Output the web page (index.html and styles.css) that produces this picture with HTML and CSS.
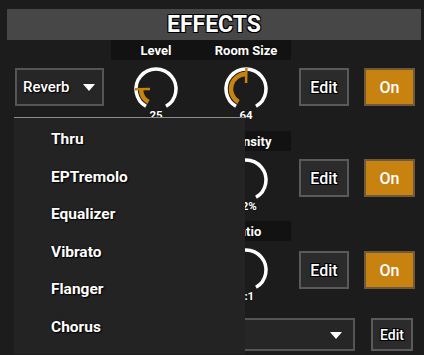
FILE: index.html
```html
<!DOCTYPE html>
<html>
<head>
<meta charset="utf-8">
<link rel="stylesheet" href="styles.css">
</head>
<body>
<div class="app">
  <div class="header">EFFECTS</div>

  <div class="row r1">
    <div class="sel-cell">
      <div class="select"><span>Reverb</span><span class="caret"></span></div>
      <div class="menu">
        <div class="item">Thru</div>
        <div class="item">EPTremolo</div>
        <div class="item">Equalizer</div>
        <div class="item">Vibrato</div>
        <div class="item">Flanger</div>
        <div class="item">Chorus</div>
      </div>
    </div>
    <div class="knob-cell">
      <div class="klabel">Level</div>
      <svg class="knob" width="46" height="46" viewBox="0 0 46 46">
        <path class="track" d="M13 40.32 A20 20 0 1 1 33 40.32"/>
        <path class="val" d="M15.5 35.99 A15 15 0 0 1 8 23.26"/>
        <line class="ptr" x1="17" y1="23.1" x2="2" y2="23.37"/>
      </svg>
      <div class="kval">25</div>
    </div>
    <div class="knob-cell">
      <div class="klabel">Room Size</div>
      <svg class="knob" width="46" height="46" viewBox="0 0 46 46">
        <path class="track" d="M13 40.32 A20 20 0 1 1 33 40.32"/>
        <path class="val" d="M15.5 35.99 A15 15 0 0 1 23.26 8"/>
        <line class="ptr" x1="23.1" y1="17" x2="23.37" y2="2"/>
      </svg>
      <div class="kval">64</div>
    </div>
    <div class="btn edit">Edit</div>
    <div class="btn on">On</div>
  </div>

  <div class="row r2">
    <div class="sel-cell">
      <div class="select"><span></span><span class="caret"></span></div>
    </div>
    <div class="knob-cell">
      <div class="klabel"></div>
      <svg class="knob" width="46" height="46" viewBox="0 0 46 46">
        <path class="track" d="M13 40.32 A20 20 0 1 1 33 40.32"/>
        <path class="val" d="M15.5 35.99 A15 15 0 0 1 10.01 15.5"/>
        <line class="ptr" x1="17.8" y1="20" x2="4.81" y2="12.5"/>
      </svg>
      <div class="kval"></div>
    </div>
    <div class="knob-cell">
      <div class="klabel">Intensity</div>
      <svg class="knob" width="46" height="46" viewBox="0 0 46 46">
        <path class="track" d="M13 40.32 A20 20 0 1 1 33 40.32"/>
        <path class="val" d="M15.5 35.99 A15 15 0 0 1 9.3 29.1"/>
        <line class="ptr" x1="17.52" y1="25.44" x2="3.82" y2="31.54"/>
      </svg>
      <div class="kval">12%</div>
    </div>
    <div class="btn edit">Edit</div>
    <div class="btn on">On</div>
  </div>

  <div class="row r3">
    <div class="sel-cell">
      <div class="select"><span></span><span class="caret"></span></div>
    </div>
    <div class="knob-cell">
      <div class="klabel"></div>
      <svg class="knob" width="46" height="46" viewBox="0 0 46 46">
        <path class="track" d="M13 40.32 A20 20 0 1 1 33 40.32"/>
        <path class="val" d="M15.5 35.99 A15 15 0 0 1 28.13 8.9"/>
        <line class="ptr" x1="25.05" y1="17.36" x2="30.18" y2="3.27"/>
      </svg>
      <div class="kval"></div>
    </div>
    <div class="knob-cell">
      <div class="klabel">Ratio</div>
      <svg class="knob" width="46" height="46" viewBox="0 0 46 46">
        <path class="track" d="M13 40.32 A20 20 0 1 1 33 40.32"/>
        <path class="val" d="M15.5 35.99 A15 15 0 0 1 8.23 25.6"/>
        <line class="ptr" x1="17.09" y1="24.04" x2="2.32" y2="26.65"/>
      </svg>
      <div class="kval">4:1</div>
    </div>
    <div class="btn edit">Edit</div>
    <div class="btn on">On</div>
  </div>

  <div class="row r4">
    <div class="select wide"><span></span><span class="caret"></span></div>
    <div class="btn edit small">Edit</div>
  </div>
</div>
</body>
</html>
```

FILE: styles.css
```css
* { box-sizing: border-box; }
html, body {
  margin: 0;
  padding: 0;
  background: #1c1c1c;
  height: 355px;
  overflow: hidden;
}
body {
  font-family: Roboto, "Liberation Sans", Arial, sans-serif;
  color: #fff;
}
.app {
  padding: 9px 3px 0 7px;
}
.header {
  height: 31px;
  background: #474747;
  text-align: center;
  font-size: 23px;
  font-weight: 700;
  line-height: 32px;
  text-shadow: 1px 1px 0 #000, -1px -1px 0 #000, 1px -1px 0 #000, -1px 1px 0 #000;
}
.row {
  display: flex;
  align-items: flex-start;
  padding-left: 8px;
}
.r1 { height: 91px; }
.r2 { height: 90px; }
.r3 { height: 90px; }
.r3 .btn { margin-top: 30px; }
.r4 { margin-top: 7px; }
.sel-cell {
  position: relative;
  width: 89px;
  margin-right: 7px;
  margin-top: 28px;
}
.select {
  height: 38px;
  width: 89px;
  background: #262626;
  border: 2px solid #555;
  display: flex;
  align-items: center;
  justify-content: space-between;
  padding: 0 7px 0 6px;
  font-size: 15px;
  font-weight: 500;
  text-shadow: 0 0 2px #000, 1px 1px 1px #000;
}
.caret {
  width: 0;
  height: 0;
  border-left: 6px solid transparent;
  border-right: 6px solid transparent;
  border-top: 7px solid #fff;
  margin-top: 1px;
}
.select.wide {
  width: 340px;
  height: 33px;
  padding-right: 11px;
}
.knob-cell {
  width: 90px;
  display: flex;
  flex-direction: column;
  align-items: center;
}
.klabel {
  width: 90px;
  height: 20px;
  background: #121212;
  text-align: center;
  font-size: 13px;
  font-weight: 700;
  line-height: 21px;
  text-shadow: 0 0 2px #000;
}
.knob {
  display: block;
  margin-top: 5.5px;
  overflow: visible;
}
.knob .track {
  fill: none;
  stroke: #fff;
  stroke-width: 3.5;
}
.knob .val {
  fill: none;
  stroke: #c8820f;
  stroke-width: 4.5;
}
.knob .ptr {
  stroke: #c8820f;
  stroke-width: 2.5;
}
.kval {
  margin-top: -3px;
  height: 12px;
  font-size: 11.5px;
  font-weight: 700;
  line-height: 12px;
  text-shadow: 0 0 2px #000;
}
.btn {
  margin-top: 28px;
  height: 38px;
  display: flex;
  align-items: center;
  justify-content: center;
  font-size: 16px;
  font-weight: 500;
  text-shadow: 1px 1px 0 #000, -1px -1px 0 #000, 1px -1px 0 #000, -1px 1px 0 #000;
}
.btn.edit {
  width: 50px;
  margin-left: 8px;
  background: #2b2b2b;
  border: 2px solid #5a5a5a;
}
.btn.on {
  width: 51px;
  margin-left: 15px;
  background: #c8820f;
  border: 2px solid #6e5a3a;
  text-shadow: none;
}
.btn.edit.small {
  margin-top: 0;
  width: 42px;
  height: 33px;
  margin-left: 16px;
  font-size: 14px;
}
.menu {
  position: absolute;
  left: -1px;
  top: 49px;
  width: 231px;
  height: 237px;
  background: #232323;
  border-top: 1px solid #8c8c8c;
  padding-top: 3px;
  z-index: 10;
}
.item {
  height: 37.6px;
  line-height: 37.6px;
  padding-left: 37px;
  font-size: 15.5px;
  font-weight: 700;
  text-shadow: 0 0 2px #000, 1px 1px 1px #000;
}
```
